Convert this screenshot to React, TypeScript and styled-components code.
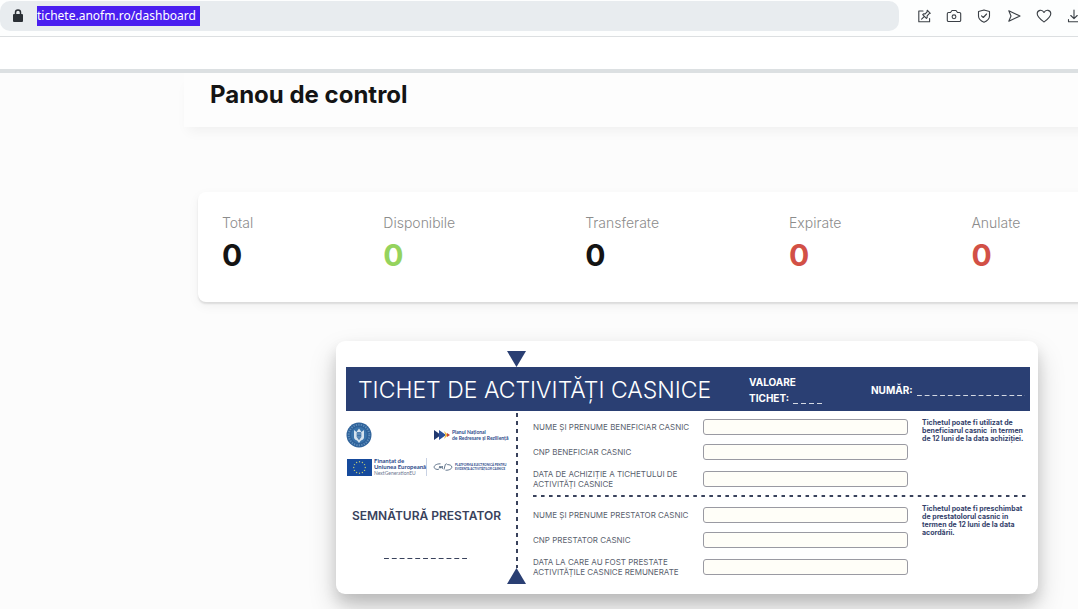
import React, { useId } from "react";
import styled, { createGlobalStyle } from "styled-components";

const navy = "#2a3f73";
const ink = "#39425c";

const GlobalStyle = createGlobalStyle`
  *, *::before, *::after { box-sizing: border-box; }
  body {
    margin: 0;
    background: #fcfcfc;
    color: #141414;
    font-family: Inter, "Liberation Sans", sans-serif;
    overflow-x: hidden;
  }
  h1, h2, p, dl, dd { margin: 0; }
`;

const Page = styled.div`
  display: flex;
  flex-direction: column;
  min-height: 100vh;
  overflow: hidden;
`;

/* Browser toolbar */

const Toolbar = styled.header`
  display: flex;
  align-items: center;
  gap: 10px;
  height: 37px;
  padding: 1px 0 5px;
  background: #fdfefe;
  border-bottom: 1px solid #dcdfe1;
  overflow: hidden;
`;

const AddressBar = styled.label`
  display: flex;
  flex: 1;
  align-items: center;
  gap: 13px;
  height: 30px;
  padding-left: 12px;
  border-radius: 10px;
  background: #e8ecef;
`;

const AddressInput = styled.input`
  width: 163px;
  height: 20px;
  padding: 0;
  border: 0;
  outline: 0;
  background: #4a1ff0;
  color: #fff;
  font: 12px/20px "Noto Sans", sans-serif;
`;

const Actions = styled.nav`
  display: flex;
  flex: none;
  margin-right: -11px;
`;

const IconButton = styled.button`
  display: grid;
  place-items: center;
  width: 30px;
  height: 30px;
  padding: 0;
  border: 0;
  background: none;
  color: #3b4046;
`;

const Icon = styled.svg`
  width: 16px;
  height: 16px;
  fill: none;
  stroke: currentColor;
  stroke-width: 1.1;
  stroke-linecap: round;
  stroke-linejoin: round;
`;

const TopStrip = styled.div`
  height: 36px;
  background: #fff;
  border-bottom: 4px solid #dce0e2;
`;

/* Dashboard */

const Main = styled.main`
  min-width: 1006px;
  margin-left: 184px;
  padding-bottom: 15px;
`;

const PageHeader = styled.div`
  height: 54px;
  padding: 6px 26px;
  background: #fdfdfd;
  box-shadow: 0 8px 12px -4px rgba(0, 0, 0, 0.05);
`;

const Title = styled.h1`
  font-size: 24px;
  line-height: 32px;
  font-weight: 700;
`;

const Content = styled.div`
  padding: 65px 14px 0;
`;

const Stats = styled.dl`
  display: flex;
  gap: 130px;
  height: 110px;
  padding: 21px 24px;
  border-radius: 8px;
  background: #fff;
  box-shadow: 0 2px 2px rgba(0, 0, 0, 0.1), 0 4px 12px rgba(0, 0, 0, 0.05);
`;

const StatLabel = styled.dt`
  color: #8c8c8c;
  font-size: 14px;
  line-height: 20px;
  font-weight: 300;
`;

const StatValue = styled.dd<{ $color: string }>`
  color: ${(p) => p.$color};
  font-size: 30px;
  line-height: 44px;
  font-weight: 700;
`;

/* Ticket */

const Ticket = styled.section`
  max-width: 702px;
  margin: 39px auto 0;
  padding: 10px 8px 10px 10px;
  border-radius: 9px;
  background: #fff;
  box-shadow: 0 14px 28px rgba(0, 0, 0, 0.18), 0 8px 14px rgba(0, 0, 0, 0.12);
`;

const Triangle = styled.svg`
  display: block;
  width: 19px;
  height: 16px;
  fill: ${navy};
`;

const TopMark = styled.div`
  padding-left: 161px;
`;

const Banner = styled.div`
  display: grid;
  grid-template-columns: 1fr 122px 159px;
  align-items: center;
  height: 44px;
  padding: 2px 0 0 12px;
  background: ${navy};
  color: #fff;
`;

const BannerTitle = styled.h2`
  font-size: 23px;
  line-height: 32px;
  font-weight: 300;
  white-space: nowrap;
`;

const BannerText = styled.p`
  display: flex;
  font-size: 10px;
  line-height: 16px;
  font-weight: 700;
`;

const Dashes = styled.span<{ $width?: number; $color: string; $thick?: number; $dash?: number }>`
  display: block;
  width: ${(p) => (p.$width ? `${p.$width}px` : "100%")};
  height: ${(p) => p.$thick ?? 1}px;
  background: linear-gradient(90deg, ${(p) => p.$color} ${(p) => p.$dash ?? 5}px, transparent ${(p) => p.$dash ?? 5}px)
    0 0 / 8px 100% round;
`;

const Blank = styled(Dashes)`
  align-self: flex-end;
  margin: 0 0 2px 4px;
  opacity: 0.8;
`;

const TicketBody = styled.div`
  display: grid;
  grid-template-columns: 161px 19px 1fr;
`;

const Issuer = styled.div`
  display: flex;
  flex-direction: column;
  align-items: center;
  padding-top: 11px;
`;

const Logos = styled.div`
  display: grid;
  grid-template-columns: 87px 1fr;
  grid-auto-rows: 26px;
  row-gap: 6px;
  align-items: center;
  align-self: stretch;
`;

const Logo = styled.div`
  display: flex;
  align-items: center;
  gap: 2px;
  white-space: nowrap;
`;

const LogoText = styled.div<{ $size: number; $line: number }>`
  color: #2b4a8b;
  font-family: Lato, sans-serif;
  font-size: ${(p) => p.$size}px;
  line-height: ${(p) => p.$line}px;
  font-weight: 700;
`;

const EuText = styled(LogoText)`
  border-right: 1px solid #c9d2e4;
`;

const SmallLine = styled.div`
  color: #6d7690;
  font-size: 5px;
  font-weight: 400;
`;

const Signature = styled.p`
  margin: 28px 0 34px;
  color: ${ink};
  font-size: 12px;
  line-height: 16px;
  font-weight: 600;
  white-space: nowrap;
`;

const Perforation = styled.div`
  display: flex;
  flex-direction: column;
  align-items: center;
  padding-top: 2px;
`;

const PerforationLine = styled.div`
  flex: 1;
  width: 2px;
  background: linear-gradient(${ink} 4px, transparent 4px) 0 0 / 100% 8px repeat;
`;

const Details = styled.div`
  padding-left: 7px;
`;

const Section = styled.div`
  display: grid;
  grid-template-columns: 375px 1fr;
  column-gap: 14px;
  padding-top: 8px;
`;

const Fields = styled.div<{ $top?: number; $bottom?: number }>`
  display: grid;
  gap: 9px;
  padding: ${(p) => p.$top ?? 0}px 0 ${(p) => p.$bottom ?? 6}px;
`;

const Field = styled.div`
  display: grid;
  grid-template-columns: 170px 1fr;
  align-items: center;
`;

const FieldLabel = styled.label`
  color: #5a5f6e;
  font-size: 8px;
  line-height: 10px;
  white-space: pre-line;
`;

const FieldInput = styled.input`
  width: 100%;
  height: 16px;
  padding: 0 4px;
  border: 1px solid #9a9aa2;
  border-radius: 3px;
  background: #fffef8;
  font: 8px/10px Inter, sans-serif;
`;

const Note = styled.p`
  color: #343f6b;
  font-size: 7px;
  line-height: 8px;
  font-weight: 700;
  white-space: pre;
`;

function TicketField({ label }: { label: string }) {
  const id = useId();
  return (
    <Field>
      <FieldLabel htmlFor={id}>{label}</FieldLabel>
      <FieldInput id={id} type="text" />
    </Field>
  );
}

function Emblem() {
  return (
    <svg width="26" height="26" viewBox="0 0 26 26" aria-label="Guvernul României" role="img">
      <circle cx="13" cy="13" r="12.5" fill="#2d6199" />
      <circle cx="13" cy="13" r="10.3" fill="none" stroke="#5f8dba" strokeWidth="2" strokeDasharray="1.3 1.2" />
      <circle cx="13" cy="13" r="8" fill="#3a73aa" />
      <path d="M8 8l2.5 2L13 6.5l2.5 3.5L18 8v7.5c0 2-2.5 2.5-3.5 3.5L13 21l-1.5-2C10.5 18 8 17.5 8 15.5z" fill="#d5e3ee" />
      <path d="M11 10.5h4v4.5l-2 2.5-2-2.500zM13 10.500v7M11 13.500h4" fill="#6d9bc5" stroke="#2d6199" strokeWidth=".6" />
    </svg>
  );
}

function EuFlag() {
  return (
    <svg width="26" height="17" viewBox="0 0 26 17" aria-label="Uniunea Europeană" role="img">
      <rect x="1" width="25" height="17" fill="#164a9c" />
      {Array.from({ length: 12 }, (_, i) => {
        const a = (i * Math.PI) / 6;
        return <circle key={i} cx={13.5 + 5.8 * Math.sin(a)} cy={8.5 - 5.8 * Math.cos(a)} r=".7" fill="#b9c676" />;
      })}
    </svg>
  );
}

function RecoveryMark() {
  return (
    <svg width="17" height="12" viewBox="0 0 17 12" aria-hidden="true">
      <path d="M1 1l7 5-7 5z" fill="#20386f" />
      <path d="M6 1l7 5-7 5z" fill="#2b4f9a" />
      <path d="M11 2l4 4-4 4 1.500-4z" fill="#f2b632" />
      <path d="M14 4l3 2-3 2z" fill="#c9463a" />
    </svg>
  );
}

function PlatformMark() {
  return (
    <svg width="20" height="10" viewBox="0 0 20 10" aria-hidden="true" fill="none" stroke="#3c5470">
      <path d="M7.5 1.8C3 1.8.8 3.8 1.2 5.5c.3 1.4 2 2 4.5 2M12.5 8.2c4 .2 6.500-1.500 6.300-3.300-.2-1.500-2-2.300-4.600-2.300" strokeWidth=".8" />
      <path d="M6 6.500L7 4l.8 2.200L9.200 4l.3 2.800M11 7.500l1.300-5M12.300 2.500l1.500-.8" strokeWidth=".8" />
    </svg>
  );
}

const stats = [
  { label: "Total", value: 0, color: "#141414" },
  { label: "Disponibile", value: 0, color: "#95d35d" },
  { label: "Transferate", value: 0, color: "#141414" },
  { label: "Expirate", value: 0, color: "#d25046" },
  { label: "Anulate", value: 0, color: "#d25046" },
];

export default function App() {
  return (
    <Page>
      <GlobalStyle />
      <Toolbar>
        <AddressBar>
          <svg width="12" height="16" viewBox="0 0 12 16" aria-hidden="true">
            <path d="M3.500 7V4.500a2.500 2.500 0 0 1 5 0V7" fill="none" stroke="#2b3036" strokeWidth="1.500" />
            <rect x="1" y="6" width="10" height="8" rx="1" fill="#2b3036" />
          </svg>
          <AddressInput aria-label="Adresă" defaultValue="tichete.anofm.ro/dashboard" />
        </AddressBar>
        <Actions>
          <IconButton aria-label="Editare">
            <Icon viewBox="0 0 16 16">
              <path d="M7 3H2.800v10.700h10.800V10.500" />
              <path d="M11.200 2.200l3.100 3.100-1.300.5-1.900 2 .1 1.700-.8.800-3.700-3.700.8-.8 1.700.1 1.900-2zM8.400 8.400L5.600 11.200" />
            </Icon>
          </IconButton>
          <IconButton aria-label="Captură">
            <Icon viewBox="0 0 16 16">
              <path d="M2.500 4.500h2L6 2.500h4l1.500 2h2a1.200 1.200 0 0 1 1.200 1.200v6.600a1.200 1.200 0 0 1-1.200 1.200h-11a1.200 1.200 0 0 1-1.200-1.200V5.700a1.200 1.200 0 0 1 1.200-1.200z" />
              <circle cx="8" cy="8.800" r="1.900" />
            </Icon>
          </IconButton>
          <IconButton aria-label="Protecție">
            <Icon viewBox="0 0 16 16">
              <path d="M8 2l5.500 1.500v4.500c0 3-2.500 5-5.500 6.200C5 13 2.500 11 2.500 8V3.500z" />
              <path d="M5.500 7.800L7.300 9.500l3.300-3.500" />
            </Icon>
          </IconButton>
          <IconButton aria-label="Trimite">
            <Icon viewBox="0 0 16 16">
              <path d="M2.800 2.800L14 8 2.800 13.200 5 8z" />
            </Icon>
          </IconButton>
          <IconButton aria-label="Favorite">
            <Icon viewBox="0 0 16 16">
              <path d="M8 14C5 11.800 1.200 9.200 1.200 5.800c0-4 5-4.800 6.800-1.300 1.800-3.500 6.800-2.700 6.800 1.300C14.800 9.200 11 11.800 8 14z" />
            </Icon>
          </IconButton>
          <IconButton aria-label="Descărcări">
            <Icon viewBox="0 0 16 16">
              <path d="M8 2v8.500M4.800 7.500L8 10.700l3.200-3.200M2.500 11.500v2.200h11v-2.200" />
            </Icon>
          </IconButton>
        </Actions>
      </Toolbar>
      <TopStrip />
      <Main>
        <PageHeader>
          <Title>Panou de control</Title>
        </PageHeader>
        <Content>
          <Stats>
            {stats.map((s) => (
              <div key={s.label}>
                <StatLabel>{s.label}</StatLabel>
                <StatValue $color={s.color}>{s.value}</StatValue>
              </div>
            ))}
          </Stats>
          <Ticket>
            <TopMark>
              <Triangle viewBox="0 0 19 16" aria-hidden="true">
                <path d="M0 0h19L9.500 16z" />
              </Triangle>
            </TopMark>
            <Banner>
              <BannerTitle>TICHET DE ACTIVITĂȚI CASNICE</BannerTitle>
              <div>
                <BannerText>VALOARE</BannerText>
                <BannerText>
                  TICHET: <Blank $width={32} $color="#fff" />
                </BannerText>
              </div>
              <BannerText>
                NUMĂR: <Blank $width={108} $color="#fff" />
              </BannerText>
            </Banner>
            <TicketBody>
              <Issuer>
                <Logos>
                  <Emblem />
                  <Logo>
                    <RecoveryMark />
                    <LogoText $size={5} $line={6}>
                      Planul Național
                      <br />
                      de Redresare și Reziliență
                    </LogoText>
                  </Logo>
                  <Logo>
                    <EuFlag />
                    <EuText $size={6} $line={6}>
                      Finanțat de
                      <br />
                      Uniunea Europeană
                      <SmallLine>NextGenerationEU</SmallLine>
                    </EuText>
                  </Logo>
                  <Logo>
                    <PlatformMark />
                    <LogoText $size={3} $line={4}>
                      PLATFORMA ELECTRONICĂ PENTRU
                      <br />
                      EVIDENȚA ACTIVITĂȚILOR CASNICE
                    </LogoText>
                  </Logo>
                </Logos>
                <Signature>SEMNĂTURĂ PRESTATOR</Signature>
                <Dashes $width={86} $color={ink} />
              </Issuer>
              <Perforation>
                <PerforationLine />
                <Triangle viewBox="0 0 19 16" aria-hidden="true">
                  <path d="M0 16h19L9.500 0z" />
                </Triangle>
              </Perforation>
              <Details>
                <Section>
                  <Fields>
                    <TicketField label="NUME ȘI PRENUME BENEFICIAR CASNIC" />
                    <TicketField label="CNP BENEFICIAR CASNIC" />
                    <TicketField label={"DATA DE ACHIZIȚIE A TICHETULUI DE\nACTIVITĂȚI CASNICE"} />
                  </Fields>
                  <Note>{"Tichetul poate fi utilizat de\nbeneficiarul casnic  in termen\nde 12 luni de la data achiziției."}</Note>
                </Section>
                <Dashes $color={ink} $thick={2} $dash={4} />
                <Section>
                  <Fields $top={2} $bottom={7}>
                    <TicketField label="NUME ȘI PRENUME PRESTATOR CASNIC" />
                    <TicketField label="CNP PRESTATOR CASNIC" />
                    <TicketField label={"DATA LA CARE AU FOST PRESTATE\nACTIVITĂȚILE CASNICE REMUNERATE"} />
                  </Fields>
                  <Note>{"Tichetul poate fi preschimbat\nde prestatolorul casnic in\ntermen de 12 luni de la data\nacordării."}</Note>
                </Section>
              </Details>
            </TicketBody>
          </Ticket>
        </Content>
      </Main>
    </Page>
  );
}
